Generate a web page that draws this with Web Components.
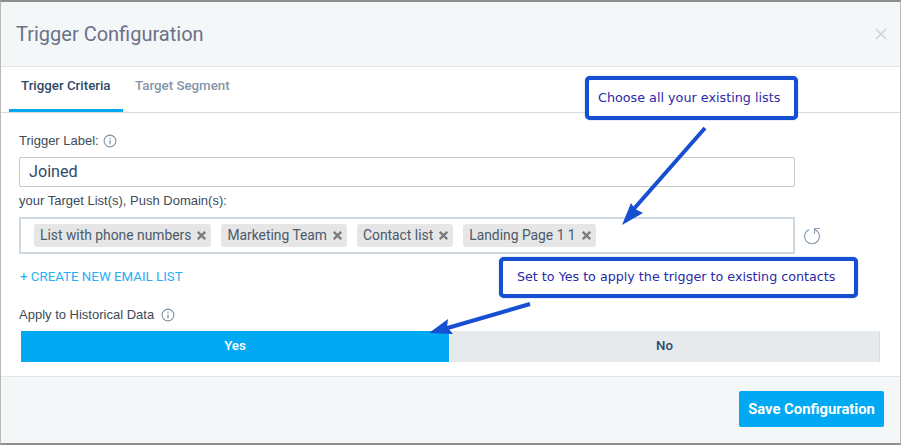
<!doctype html>
<html><head><meta charset="utf-8">
<style>html,body{margin:0;padding:0;background:#fff}</style>
</head><body>
<trigger-modal>
  <modal-tab slot="tabs" active>Trigger Criteria</modal-tab>
  <modal-tab slot="tabs">Target Segment</modal-tab>
  <list-tag slot="tags">List with phone numbers</list-tag>
  <list-tag slot="tags">Marketing Team</list-tag>
  <list-tag slot="tags">Contact list</list-tag>
  <list-tag slot="tags">Landing Page 1 1</list-tag>
</trigger-modal>
<script>
const INFO='<svg width="14" height="14" viewBox="0 0 14 14" fill="none" stroke="#7f93a8" stroke-width="1.1"><circle cx="7" cy="7" r="5.9"/><path d="M7 6.2V10.2" stroke-width="1.3"/><path d="M7 3.7V5" stroke-width="1.3"/></svg>';
function def(n,html){customElements.define(n,class extends HTMLElement{constructor(){super();this.attachShadow({mode:'open'}).innerHTML=html;}});}
def('modal-tab',`<style>
:host{display:block;font:500 13.3px/1 Roboto,sans-serif;color:#8595a8;padding:12px 12px 0;height:30px;box-sizing:content-box}
:host([active]){color:#2f4a68;border-bottom:3px solid #00a9f1;min-width:90px}
:host(:not([active])){padding-bottom:3px}
</style><slot></slot>`);
def('list-tag',`<style>
:host{display:inline-flex;align-items:center;gap:6px;height:23px;padding:0 5px 0 6px;background:#e6e6e6;border-radius:3px;font:13.85px/23px Roboto,sans-serif;color:#4b5a6b;white-space:nowrap}
svg{display:block;flex:none}
</style><slot></slot><svg width="9" height="9" viewBox="0 0 9 9"><path d="M.8 .8L8.2 8.2M8.2 .8L.8 8.2" stroke="#7c7c7c" stroke-width="2.3"/></svg>`);
def('trigger-modal',`<style>
:host{display:block;position:relative;width:901px;height:445px;box-sizing:border-box;border:1px solid #b9b9b9;border-top:2px solid #8f8f8f;border-bottom:2px solid #8f8f8f;font-family:"Liberation Sans",sans-serif;overflow:hidden;background:#fff}
.head{height:64px;background:#f4f7f8;border-bottom:1px solid #e3e6e8;display:flex;align-items:center;justify-content:space-between;padding:0 13px 0 15px}
h1{margin:0;font:400 20px/1 Roboto,sans-serif;color:#6b7188}
.x{width:12px;height:12px;display:block}
.tabs{display:flex;padding-left:8px;height:45px;border-bottom:1px solid #d5dce3;box-sizing:content-box}
.body{padding:21px 0 0 18px;height:263px;box-sizing:border-box}
.lab{font:13px/14px "Liberation Sans",sans-serif;color:#3d4a58;display:flex;align-items:center;gap:4px}
.inp{width:776px;height:30px;box-sizing:border-box;border:1px solid #c4c8cc;border-radius:2px;margin-top:9px;padding:0 9px;font:400 16.2px/28px Roboto,sans-serif;color:#2f4a68}
.row{display:flex;align-items:center;margin-top:9px;gap:9px}
.sel{width:776px;height:37px;box-sizing:border-box;border:2px solid #cfd8e0;display:flex;align-items:center;gap:10px;padding:0 13px}
.refresh{display:block}
.link{font:13.3px/14px Roboto,sans-serif;color:#27aef5;margin-top:16px;padding-left:1px}
.hist{margin-top:24px;gap:7px}
.toggle{display:flex;margin:9px 0 0 2px;width:859px;height:31px;font:500 13.3px/29px Roboto,sans-serif;text-align:center}
.yes{width:428px;background:#00a9f1;color:#fff}
.no{flex:1;background:#e6eaed;color:#2f4a68;border-left:1px solid #fff;border-right:1px solid #d5dce3}
.foot{height:67px;background:#f4f7f8;border-top:1px solid #e3e6e8;box-sizing:border-box;display:flex;justify-content:flex-end;align-items:flex-start;padding:14px 16px 0 0}
button{width:145px;height:36px;border:0;border-radius:2px;background:#00a9f1;color:#fff;font:700 14.8px/36px Roboto,sans-serif;padding:0}
.call{position:absolute;box-sizing:border-box;border:4px solid #174fd3;border-radius:5px;background:#fff;color:#2a2aa8;font:14px/1 "DejaVu Sans",sans-serif;display:flex;align-items:center;white-space:nowrap;box-shadow:0 0 1px #174fd3}
.c1{left:584px;top:74px;width:213px;height:44px;padding-left:9px;font-size:12.75px}
.c2{left:498px;top:255px;width:359px;height:41px;padding-left:14px;font-size:12.7px}
.arrows{position:absolute;left:-1px;top:-2px}
</style>
<div class="head"><h1>Trigger Configuration</h1>
<svg class="x" viewBox="0 0 12 12"><path d="M1 1L11 11M11 1L1 11" stroke="#c9cfd6" stroke-width="1.4"/></svg></div>
<div class="tabs"><slot name="tabs"></slot></div>
<div class="body">
<div class="lab">Trigger Label: ${INFO}</div>
<div class="inp">Joined</div>
<div class="lab" style="margin-top:7px">your Target List(s), Push Domain(s):</div>
<div class="row"><div class="sel"><slot name="tags"></slot></div>
<svg class="refresh" width="18" height="18" viewBox="0 0 18 18" fill="none" stroke="#8ea3b5" stroke-width="1.2"><path d="M10.5 2.4A7.4 7.4 0 1 1 5 2.6"/><path d="M10.5 7V1.5H16"/></svg></div>
<div class="link">+ CREATE NEW EMAIL LIST</div>
<div class="lab hist">Apply to Historical Data ${INFO}</div>
<div class="toggle"><div class="yes">Yes</div><div class="no">No</div></div>
</div>
<div class="foot"><button>Save Configuration</button></div>
<div class="call c1">Choose all your existing lists</div>
<div class="call c2">Set to Yes to apply the trigger to existing contacts</div>
<svg class="arrows" width="901" height="445" fill="#174fd3" stroke="none">
<path d="M705 128L632 211" stroke="#174fd3" stroke-width="4" fill="none"/>
<path d="M622 225L631 203L635 209L643 213Z"/>
<path d="M530 304L444 329" stroke="#174fd3" stroke-width="4" fill="none"/>
<path d="M429 333L448 319L447 327L453 334Z"/>
</svg>`);
</script>
</body></html>
